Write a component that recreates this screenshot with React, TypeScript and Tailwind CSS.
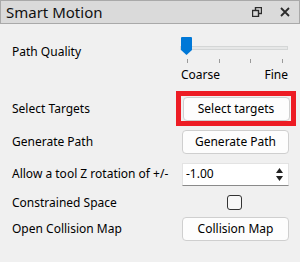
import React from 'react';

const font = { fontFamily: '"Noto Sans", "Open Sans", sans-serif' };

function RestoreIcon() {
  return (
    <svg width="10" height="10" viewBox="0 0 10 10" className="text-[#2b2b2b]">
      <rect x="3.5" y="0.5" width="6" height="6" fill="none" stroke="currentColor" strokeWidth="1.4" />
      <rect x="0.5" y="3.5" width="6" height="6" fill="#dadada" stroke="currentColor" strokeWidth="1.4" />
    </svg>
  );
}

function CloseIcon() {
  return (
    <svg width="10" height="10" viewBox="0 0 10 10">
      <path d="M1 1 L9 9 M9 1 L1 9" stroke="#2b2b2b" strokeWidth="1.8" />
    </svg>
  );
}

function Slider() {
  return (
    <div className="relative w-[108px] h-[48px]">
      {/* groove */}
      <div className="absolute left-0 top-[9px] w-[108px] h-[4px] bg-[#e6e7e7] border border-[#d4d6d6]" />
      {/* handle */}
      <svg className="absolute left-[1px] top-0" width="11" height="18" viewBox="0 0 11 18">
        <path d="M1 0 H10 A1 1 0 0 1 11 1 V13 L5.5 18 L0 13 V1 A1 1 0 0 1 1 0 Z" fill="#0078d7" />
      </svg>
      {/* ticks */}
      <div className="absolute left-[7px] top-[22px] w-px h-[4px] bg-[#9a9a9a]" />
      <div className="absolute left-[39px] top-[22px] w-px h-[4px] bg-[#9a9a9a]" />
      <div className="absolute left-[70px] top-[22px] w-px h-[4px] bg-[#9a9a9a]" />
      <div className="absolute left-[102px] top-[22px] w-px h-[4px] bg-[#9a9a9a]" />
      <div className="absolute left-0 right-0 top-[30px] flex justify-between text-[12px] leading-[16px] text-black">
        <span className="pl-[1px]">Coarse</span>
        <span>Fine</span>
      </div>
    </div>
  );
}

function Btn({ children }: { children: React.ReactNode }) {
  return (
    <div className="w-[107px] h-[24px] bg-[#fdfdfd] border border-[#cfcfcf] rounded-[4px] flex items-center justify-center text-[12px] text-black">
      {children}
    </div>
  );
}

export default function App() {
  return (
    <div className="w-[300px] h-[262px] bg-[#f0f0f0] overflow-hidden" style={font}>
      {/* Title bar */}
      <div className="h-[24px] bg-[#dadada] border border-[#a9a9a9] flex items-center pl-[5px] pr-[9px]">
        <span className="flex-1 text-[15px] text-[#111] leading-none">Smart Motion</span>
        <div className="flex items-center gap-[18px]">
          <RestoreIcon />
          <CloseIcon />
        </div>
      </div>

      <div className="pl-[12px] text-[12px] text-black">
        {/* Path quality */}
        <div className="h-[67px] flex items-start pt-[13px]">
          <div className="w-[168px] pt-[6px]">Path Quality</div>
          <Slider />
        </div>

        {/* Select targets */}
        <div className="h-[35px] flex items-center">
          <div className="w-[164px]">Select Targets</div>
          <div className="w-[120px] h-[35px] border-[5px] border-[#ed1c24] flex items-center justify-center">
            <Btn>Select targets</Btn>
          </div>
        </div>

        {/* Generate path */}
        <div className="h-[31px] flex items-center">
          <div className="w-[170px]">Generate Path</div>
          <Btn>Generate Path</Btn>
        </div>

        {/* Rotation */}
        <div className="h-[34px] flex items-center">
          <div className="w-[170px] whitespace-nowrap">Allow a tool Z rotation of +/-</div>
          <div className="w-[107px] h-[23px] bg-white border border-[#e3e3e3] border-b-[#8a8a8a] flex items-center">
            <span className="flex-1 pl-[3px]">-1.00</span>
            <div className="flex flex-col items-center justify-center gap-[3px] pr-[3px] w-[14px]">
              <svg width="7" height="5" viewBox="0 0 7 5"><path d="M3.5 0 L7 5 H0 Z" fill="#222" /></svg>
              <svg width="7" height="5" viewBox="0 0 7 5"><path d="M0 0 H7 L3.5 5 Z" fill="#222" /></svg>
            </div>
          </div>
        </div>

        {/* Constrained space */}
        <div className="h-[23px] flex items-center">
          <div className="w-[215px]">Constrained Space</div>
          <div className="w-[15px] h-[15px] rounded-[3px] border border-[#333] bg-[#f7f7f7]" />
        </div>

        {/* Collision map */}
        <div className="h-[30px] flex items-center">
          <div className="w-[170px]">Open Collision Map</div>
          <Btn>Collision Map</Btn>
        </div>
      </div>
    </div>
  );
}
